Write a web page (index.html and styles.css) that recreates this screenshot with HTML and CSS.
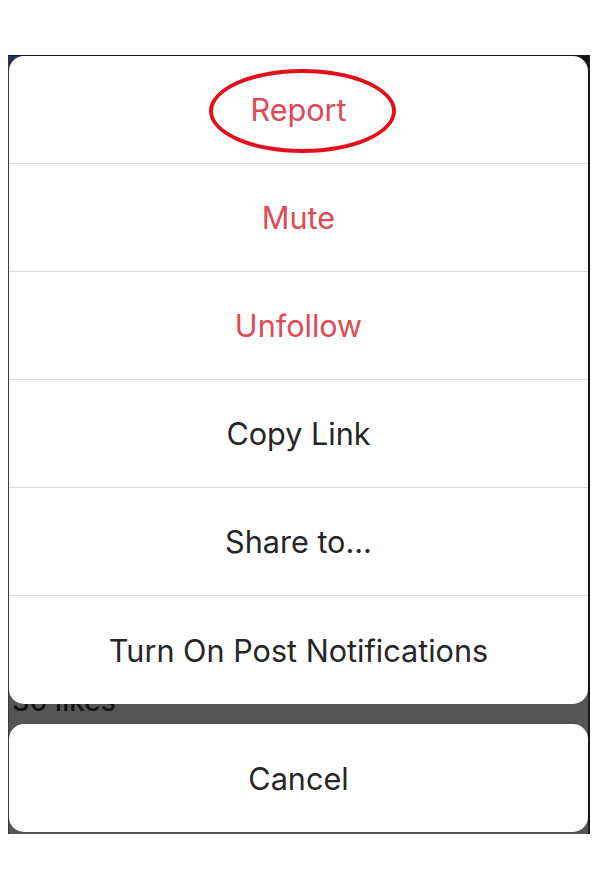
FILE: index.html
```html
<!DOCTYPE html>
<html>
<head>
    <title>Post options</title>
    <link rel="stylesheet" href="styles.css">
</head>
<body>
    <div class="frame">
        <div class="behind">30 likes</div>

        <div class="sheet">
            <div class="option danger">
                <span class="circled">Report</span>
            </div>
            <div class="option danger">Mute</div>
            <div class="option danger">Unfollow</div>
            <div class="option">Copy Link</div>
            <div class="option">Share to...</div>
            <div class="option">Turn On Post Notifications</div>
        </div>

        <div class="sheet cancel">
            <div class="option">Cancel</div>
        </div>
    </div>
</body>
</html>
```

FILE: styles.css
```css
body {
    margin: 0;
    background-color: #fff;
    font-family: Inter, "Noto Sans", sans-serif;
}
.frame {
    position: relative;
    margin: 55px 0 0 8px;
    width: 579px;
    height: 778px;
    border-top: 1px solid #1a1a1a;
    border-left: 1px solid #3a3a3a;
    border-right: 2px solid #1a1a1a;
    background: linear-gradient(90deg, #1d3652 0 50%, #141414 50%) top / 100% 20px no-repeat, #555;
}
.behind {
    position: absolute;
    left: 3px;
    top: 628px;
    font-size: 28px;
    font-weight: 500;
    color: #111;
}
.sheet {
    position: relative;
    background-color: #fff;
    border-radius: 15px;
    overflow: hidden;
}
.cancel {
    margin-top: 20px;
}
.option {
    height: 107px;
    display: flex;
    align-items: center;
    justify-content: center;
    font-size: 30.6px;
    color: #262626;
    border-bottom: 1px solid #dbdbdb;
}
.option:last-child {
    border-bottom: none;
    height: 108px;
}
.danger {
    color: #e04a55;
}
.circled {
    position: relative;
}
.circled::after {
    content: "";
    position: absolute;
    left: -41px;
    right: -49px;
    top: -22px;
    bottom: -25px;
    border: 4px solid #e3101c;
    border-radius: 50%;
}
```
